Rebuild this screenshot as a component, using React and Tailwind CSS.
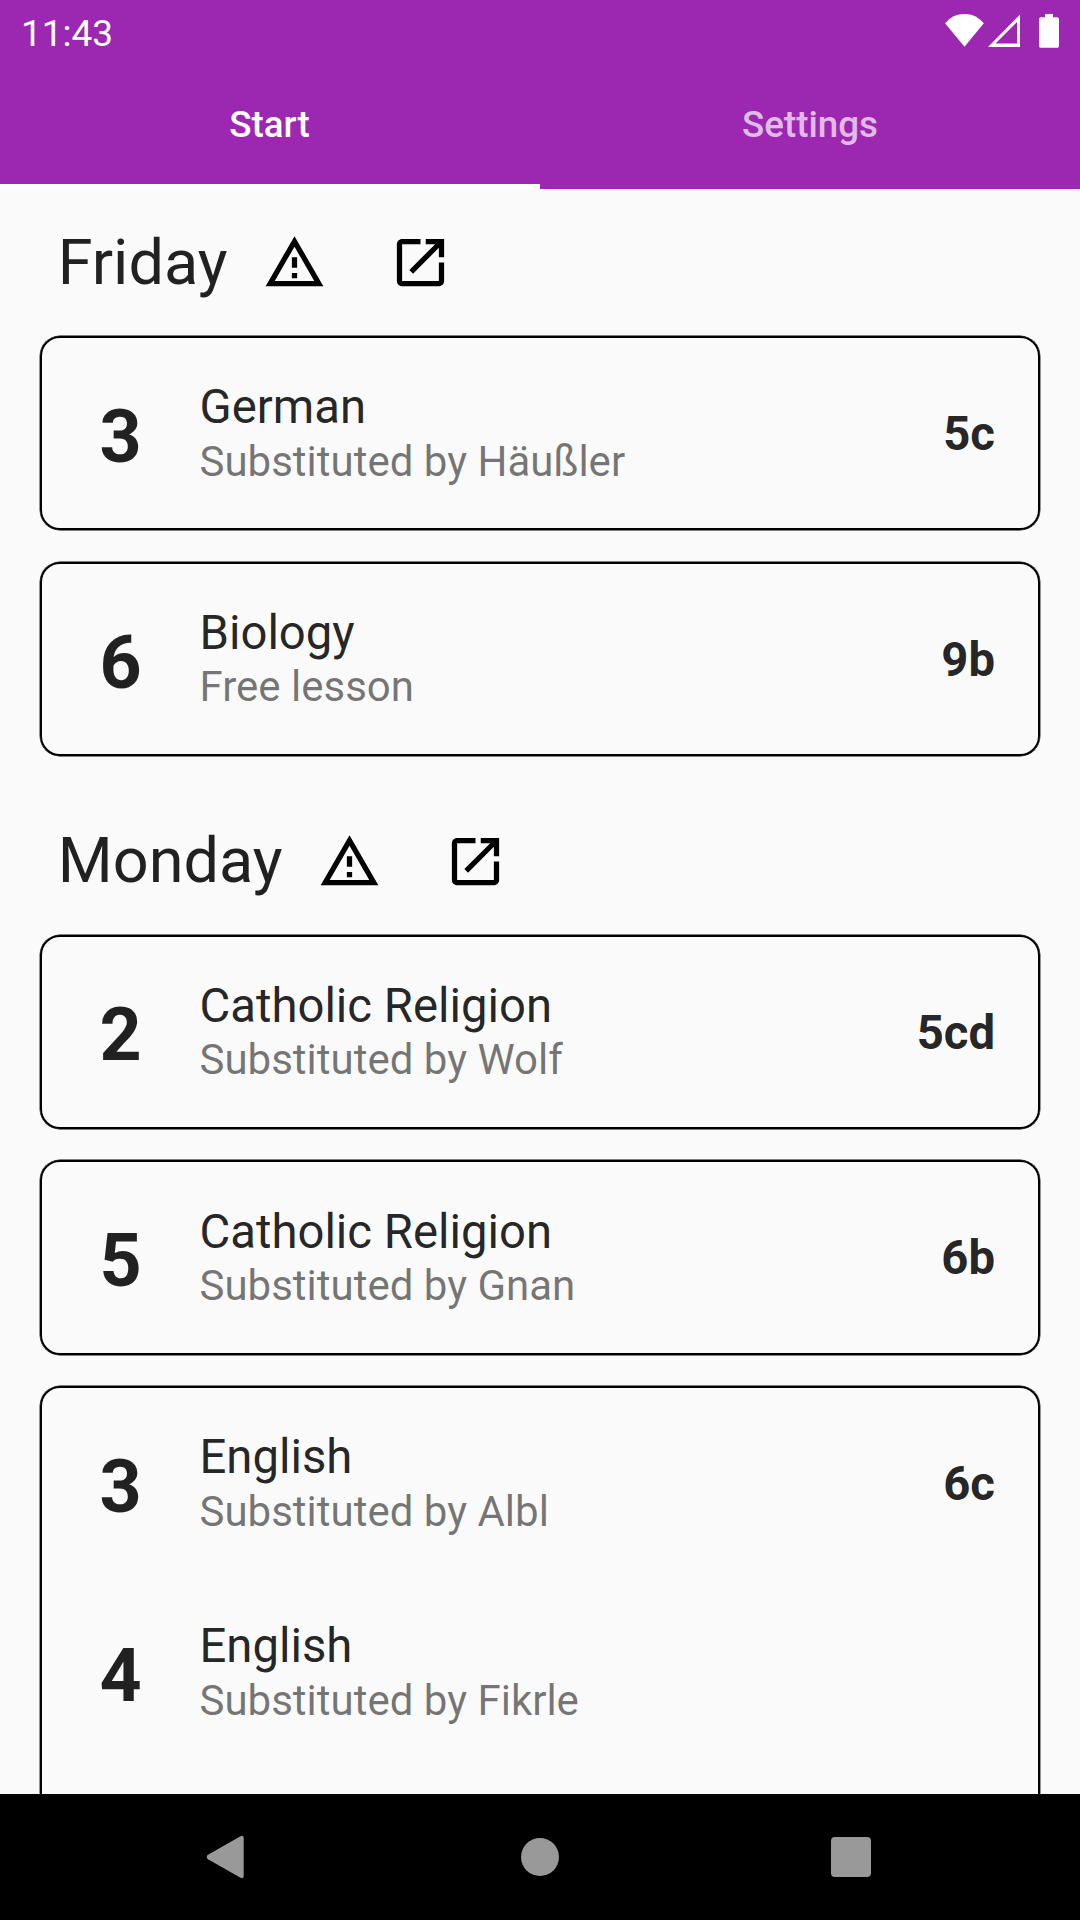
import React from "react";

const days = [
  {
    name: "Friday",
    cards: [
      [{ lesson: "3", subject: "German", info: "Substituted by Häußler", group: "5c" }],
      [{ lesson: "6", subject: "Biology", info: "Free lesson", group: "9b" }],
    ],
  },
  {
    name: "Monday",
    cards: [
      [{ lesson: "2", subject: "Catholic Religion", info: "Substituted by Wolf", group: "5cd" }],
      [{ lesson: "5", subject: "Catholic Religion", info: "Substituted by Gnan", group: "6b" }],
      [
        { lesson: "3", subject: "English", info: "Substituted by Albl", group: "6c" },
        { lesson: "4", subject: "English", info: "Substituted by Fikrle", group: "" },
      ],
    ],
  },
];

function StatusBar() {
  return (
    <div className="flex h-[63px] items-start justify-between pl-[21px] pr-[20px] text-white">
      <span className="mt-[12px] text-[37px] leading-[43px]">11:43</span>
      <div className="mt-[14px] flex items-start">
        <svg className="h-[33px] w-[40px]" viewBox="0 0 40 33" fill="currentColor">
          <path d="M0 9.300C5.300 3.200 11.800 0 19.500 0s14.100 3.200 19.300 9.300L19.500 32.800Z" />
        </svg>
        <svg className="ml-[3px] h-[34px] w-[33px]" viewBox="0 0 33 34" fill="currentColor">
          <path fillRule="evenodd" d="M32 0.500V33H0Z M29 8L7.500 29.600H29Z" />
        </svg>
        <svg className="ml-[18px] h-[34px] w-[21px]" viewBox="0 0 21 34" fill="currentColor">
          <path d="M6 0h8v3.300h4.100c1.100 0 1.900.8 1.900 1.900v26.700c0 1.100-.8 1.900-1.900 1.900H1.900c-1.100 0-1.900-.8-1.900-1.900V5.200c0-1.100.8-1.900 1.900-1.900H6Z" />
        </svg>
      </div>
    </div>
  );
}

function Tabs() {
  return (
    <div className="grid h-[126px] grid-cols-2 text-center text-[36.75px] font-medium">
      <div className="border-b-[5px] border-white pt-[40px] pr-[1px] leading-[43px] text-white">Start</div>
      <div className="pt-[40px] leading-[43px] text-white/70">Settings</div>
    </div>
  );
}

function DayHeading({ name }) {
  return (
    <div className="flex h-[147px] items-center pl-[57.750px]">
      <h2 className="text-[63px] leading-[74px]">{name}</h2>
      <svg className="ml-[35.500px] size-[63px] text-black" viewBox="0 0 24 24" fill="currentColor">
        <path d="M12 5.990L19.530 19H4.470L12 5.990M12 2L1 21h22L12 2zm1 14h-2v2h2v-2zm0-6h-2v4h2v-4z" />
      </svg>
      <svg className="ml-[63px] size-[63px] text-black" viewBox="0 0 24 24" fill="currentColor">
        <path d="M19 19H5V5h7V3H5c-1.110 0-2 .9-2 2v14c0 1.100.89 2 2 2h14c1.100 0 2-.9 2-2v-7h-2v7zM14 3v2h3.590l-9.830 9.830 1.410 1.410L19 6.410V10h2V3h-7z" />
      </svg>
    </div>
  );
}

function Lesson({ lesson, subject, info, group }) {
  return (
    <div className="flex h-[189px] pr-[43px]">
      <span className="mt-[55.250px] w-[157.500px] pl-[57.500px] text-[73.500px] font-bold leading-[86px]">
        {lesson}
      </span>
      <div className="flex-1 pt-[41.800px]">
        <div className="text-[47.250px] leading-[55px]">{subject}</div>
        <div className="mt-[1.200px] text-[42px] leading-[49px] text-black/54">{info}</div>
      </div>
      <span className="mt-[68.500px] text-[47.250px] font-bold leading-[55px]">{group}</span>
    </div>
  );
}

export default function App() {
  return (
    <div className="flex h-[1920px] w-[1080px] flex-col overflow-hidden bg-[#fafafa] font-[Roboto,sans-serif] text-black/87">
      <header className="shrink-0 bg-[#9c27b0]">
        <StatusBar />
        <Tabs />
      </header>
      <main className="min-h-0 flex-1 overflow-hidden">
        {days.map((day) => (
          <section key={day.name}>
            <DayHeading name={day.name} />
            {day.cards.map((lessons, i) => (
              <div
                key={i}
                className={
                  "mx-[40px] mb-[31.500px] rounded-[20px] border-[2px] border-black py-[0.625px] shadow-[0_0_0_0.400px_#000] " +
                  (lessons.length > 1 ? "h-[572px]" : "h-[194.250px]")
                }
              >
                {lessons.map((l) => (
                  <Lesson key={l.lesson} {...l} />
                ))}
              </div>
            ))}
          </section>
        ))}
      </main>
      <nav className="flex h-[126px] shrink-0 items-center bg-black pl-[206px] text-[#999999]">
        <svg className="h-[44px] w-[38px]" viewBox="0 0 38 44" fill="currentColor">
          <path d="M34.500 1.200 2 19.800c-1.700 1-1.700 3.400 0 4.400L34.500 42.800c1.600.9 3.200 0 3.200-1.800V3c0-1.800-1.600-2.700-3.200-1.800Z" />
        </svg>
        <div className="ml-[277px] size-[38px] rounded-full bg-[#999999]" />
        <div className="ml-[272px] size-[40px] rounded-[4px] bg-[#999999]" />
      </nav>
    </div>
  );
}
